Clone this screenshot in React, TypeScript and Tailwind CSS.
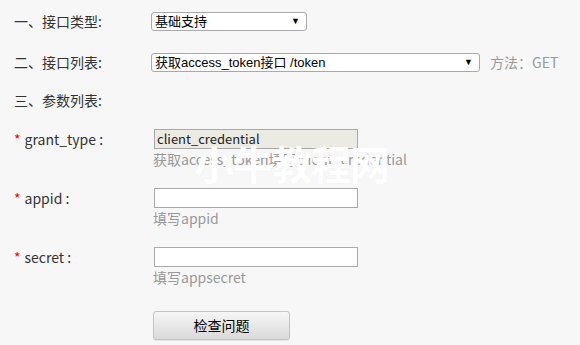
// API debug form — 580×345, light gray page
// label column to x:151, fields start at x:151–154
const font = "font-['Segoe_UI','Noto_Sans_CJK_SC',sans-serif]";

function Label({ children, required }: { children: React.ReactNode; required?: boolean }) {
  return (
    <div className="w-[137px] shrink-0 text-[14px] text-[#333]">
      {required && <span className="text-[#f00] mr-[4px]">*</span>}
      {children}
    </div>
  );
}

function FakeSelect({ value, width }: { value: string; width: string }) {
  return (
    <div
      className={`${width} h-[19px] flex items-center justify-between bg-white border border-[#a9a9a9] rounded-[3px] pl-[3px] pr-[6px] font-['Liberation_Sans','Noto_Sans_CJK_SC',sans-serif] text-[13px] text-black leading-none`}
    >
      <span className="whitespace-nowrap">{value}</span>
      <span className="text-[9px]">▼</span>
    </div>
  );
}

function Field({
  label,
  value,
  hint,
  disabled,
}: {
  label: string;
  value?: string;
  hint: string;
  disabled?: boolean;
}) {
  return (
    <div className="flex">
      <div className="h-[20px] flex items-center">
        <Label required>{label}</Label>
      </div>
      <div className="ml-[3px] flex flex-col">
        <div
          className={`w-[204px] h-[20px] border border-[#a9a9a9] px-[2px] flex items-center text-[13px] text-[#222] ${
            disabled ? "bg-[#ebebe4]" : "bg-white"
          }`}
        >
          {value}
        </div>
        <div className="-ml-[1px] h-[21px] flex items-center text-[14px] text-[#999] whitespace-nowrap">
          {hint}
        </div>
      </div>
    </div>
  );
}

export default function App() {
  return (
    <div className={`relative w-[580px] h-[345px] overflow-hidden bg-[#f7f7f7] pl-[14px] ${font}`}>
      {/* 一、接口类型 */}
      <div className="mt-[12px] h-[19px] flex items-center">
        <Label>一、接口类型:</Label>
        <FakeSelect value="基础支持" width="w-[156px]" />
      </div>

      {/* 二、接口列表 */}
      <div className="mt-[22px] h-[19px] flex items-center">
        <Label>二、接口列表:</Label>
        <FakeSelect value="获取access_token接口 /token" width="w-[329px]" />
        <span className="ml-[10px] text-[14px] text-[#999]">方法：GET</span>
      </div>

      {/* 三、参数列表 */}
      <div className="mt-[18px] h-[20px] flex items-center">
        <Label>三、参数列表:</Label>
      </div>

      <div className="mt-[19px] flex flex-col gap-[18px]">
        <Field label="grant_type :" value="client_credential" hint="获取access_token填写client_credential" disabled />
        <Field label="appid :" hint="填写appid" />
        <Field label="secret :" hint="填写appsecret" />
      </div>

      <button className="mt-[23px] ml-[139px] w-[137px] h-[29px] rounded-[3px] border border-[#c4c4c4] bg-gradient-to-b from-[#f6f6f6] to-[#dadada] shadow-[0_1px_1px_rgba(0,0,0,0.08)] text-[14px] text-black">
        检查问题
      </button>

      {/* watermark */}
      <div className="absolute left-[194px] top-[143px] text-[40px] font-bold leading-none tracking-[-1px] text-white [text-shadow:0_0_1px_rgba(0,0,0,0.05)] select-none">
        小牛教程网
      </div>
    </div>
  );
}
